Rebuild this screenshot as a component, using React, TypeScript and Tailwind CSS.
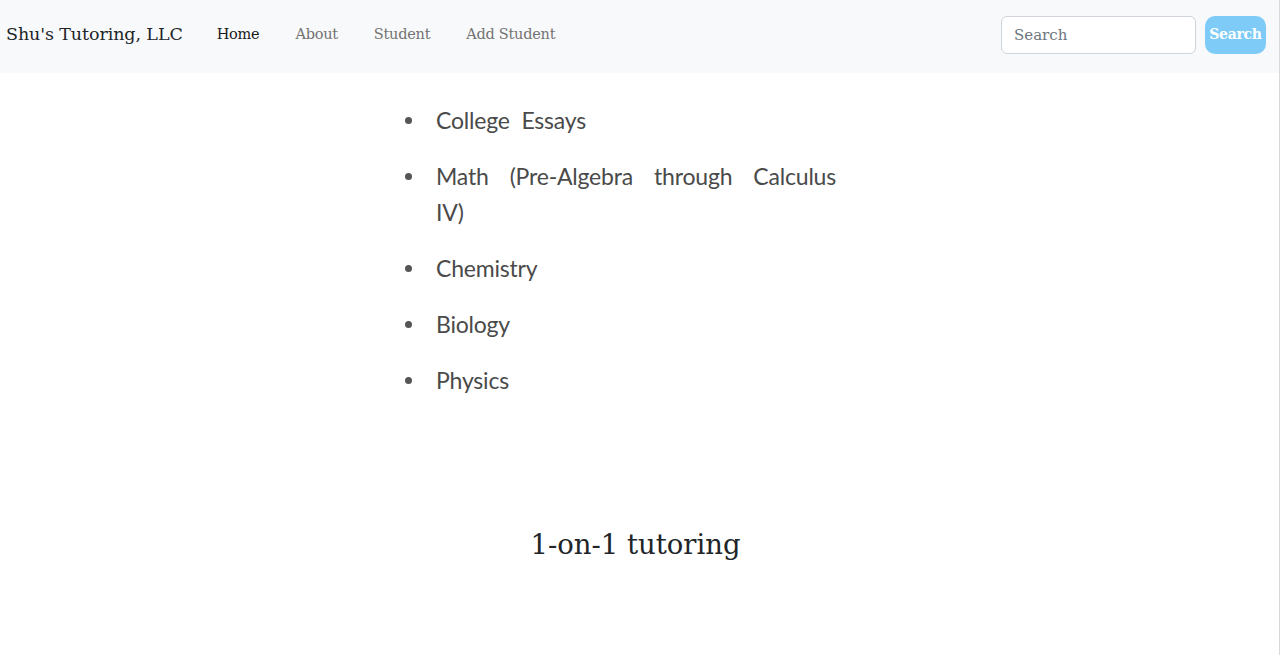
import React from 'react';

const serif = { fontFamily: '"DejaVu Serif", Georgia, serif' };

export default function App() {
  const subjects = ['College Essays', 'Math (Pre-Algebra through Calculus IV)', 'Chemistry', 'Biology', 'Physics'];

  return (
    <div className="w-[1280px] min-h-[655px] bg-white border-r border-[#d9d9d9]" style={serif}>
      <nav className="h-[73px] bg-[#f8f9fa] flex items-center pl-[6px] pr-[13px] pb-[4px]">
        <a className="text-[17.5px] text-[#212529] mr-[16px] tracking-[-0.1px]">Shu's Tutoring, LLC</a>
        <ul className="flex items-center text-[14.5px] tracking-[-0.25px]">
          <li className="px-[18px] text-[#1a1a1a]">Home</li>
          <li className="px-[18px] text-[#737373]">About</li>
          <li className="px-[18px] text-[#737373]">Student</li>
          <li className="px-[18px] text-[#737373]">Add Student</li>
        </ul>
        <div className="ml-auto flex items-center gap-[9px]">
          <input
            placeholder="Search"
            className="w-[195px] h-[38px] px-[12px] rounded-[6px] border border-[#ced4da] bg-white text-[15px] placeholder:text-[#6c757d] outline-none"
            style={serif}
          />
          <button className="h-[38px] w-[61px] rounded-[10px] bg-[#7ecbf8] text-white text-[14px] font-bold tracking-[-0.3px]">Search</button>
        </div>
      </nav>

      <ul className="ml-[404px] w-[432px] mt-[29px] text-[23px] leading-[36px] text-[#4a4a4a] [word-spacing:6px] tracking-[-0.2px]" style={{ fontFamily: 'Lato, "Open Sans", sans-serif' }}>
        {subjects.map((s) => (
          <li key={s} className="mb-[20px] grid grid-cols-[32px_1fr]">
            <span className="flex h-[36px] items-center pl-[1px]">
              <span className="block w-[7px] h-[7px] rounded-full bg-[#555]" />
            </span>
            <span className="text-justify">{s}</span>
          </li>
        ))}
      </ul>

      <h2 className="text-center text-[27.5px] text-[#212529] mt-[126px] pr-[8px]">1-on-1 tutoring</h2>
    </div>
  );
}
